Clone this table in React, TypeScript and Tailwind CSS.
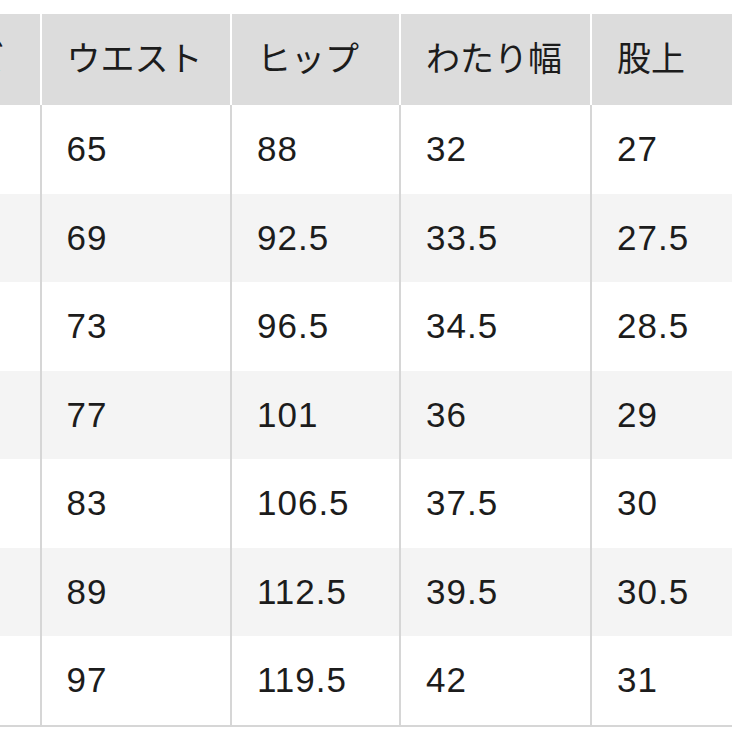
import React from "react";

const rows = [
  ["", "65", "88", "32", "27"],
  ["", "69", "92.5", "33.5", "27.5"],
  ["", "73", "96.5", "34.5", "28.5"],
  ["", "77", "101", "36", "29"],
  ["", "83", "106.5", "37.5", "30"],
  ["", "89", "112.5", "39.5", "30.5"],
  ["", "97", "119.5", "42", "31"],
];

const widths = ["w-[163.5px]", "w-[190.5px]", "w-[169px]", "w-[191px]", "w-[160px]"];

export default function App() {
  return (
    <div
      className="w-[732px] h-[732px] overflow-hidden bg-white pt-[14px] text-[#1c1c1c]"
      style={{ fontFamily: '"Liberation Sans", "Noto Sans CJK JP", sans-serif' }}
    >
      <div className="ml-[-122px] w-[880px]">
        <div className="flex h-[91px] bg-[#dcdcdc]">
          {["サイズ", "ウエスト", "ヒップ", "わたり幅", "股上"].map((h, i) => (
            <div
              key={i}
              className={`${widths[i]} shrink-0 flex items-center pl-[25px] text-[34px] ${i < 4 ? "border-r-2 border-white" : ""}`}
            >
              {h}
            </div>
          ))}
        </div>
        {rows.map((r, ri) => (
          <div key={ri} className={`flex h-[88.5px] ${ri % 2 === 1 ? "bg-[#f4f4f4]" : "bg-white"}`}>
            {r.map((c, i) => (
              <div
                key={i}
                className={`${widths[i]} shrink-0 flex items-center pl-[25px] text-[35px] tracking-[1px] ${i < 4 ? "border-r-2 border-[#d6d6d6]" : ""}`}
              >
                {c}
              </div>
            ))}
          </div>
        ))}
        <div className="h-[2px] bg-[#d6d6d6]" />
      </div>
    </div>
  );
}
